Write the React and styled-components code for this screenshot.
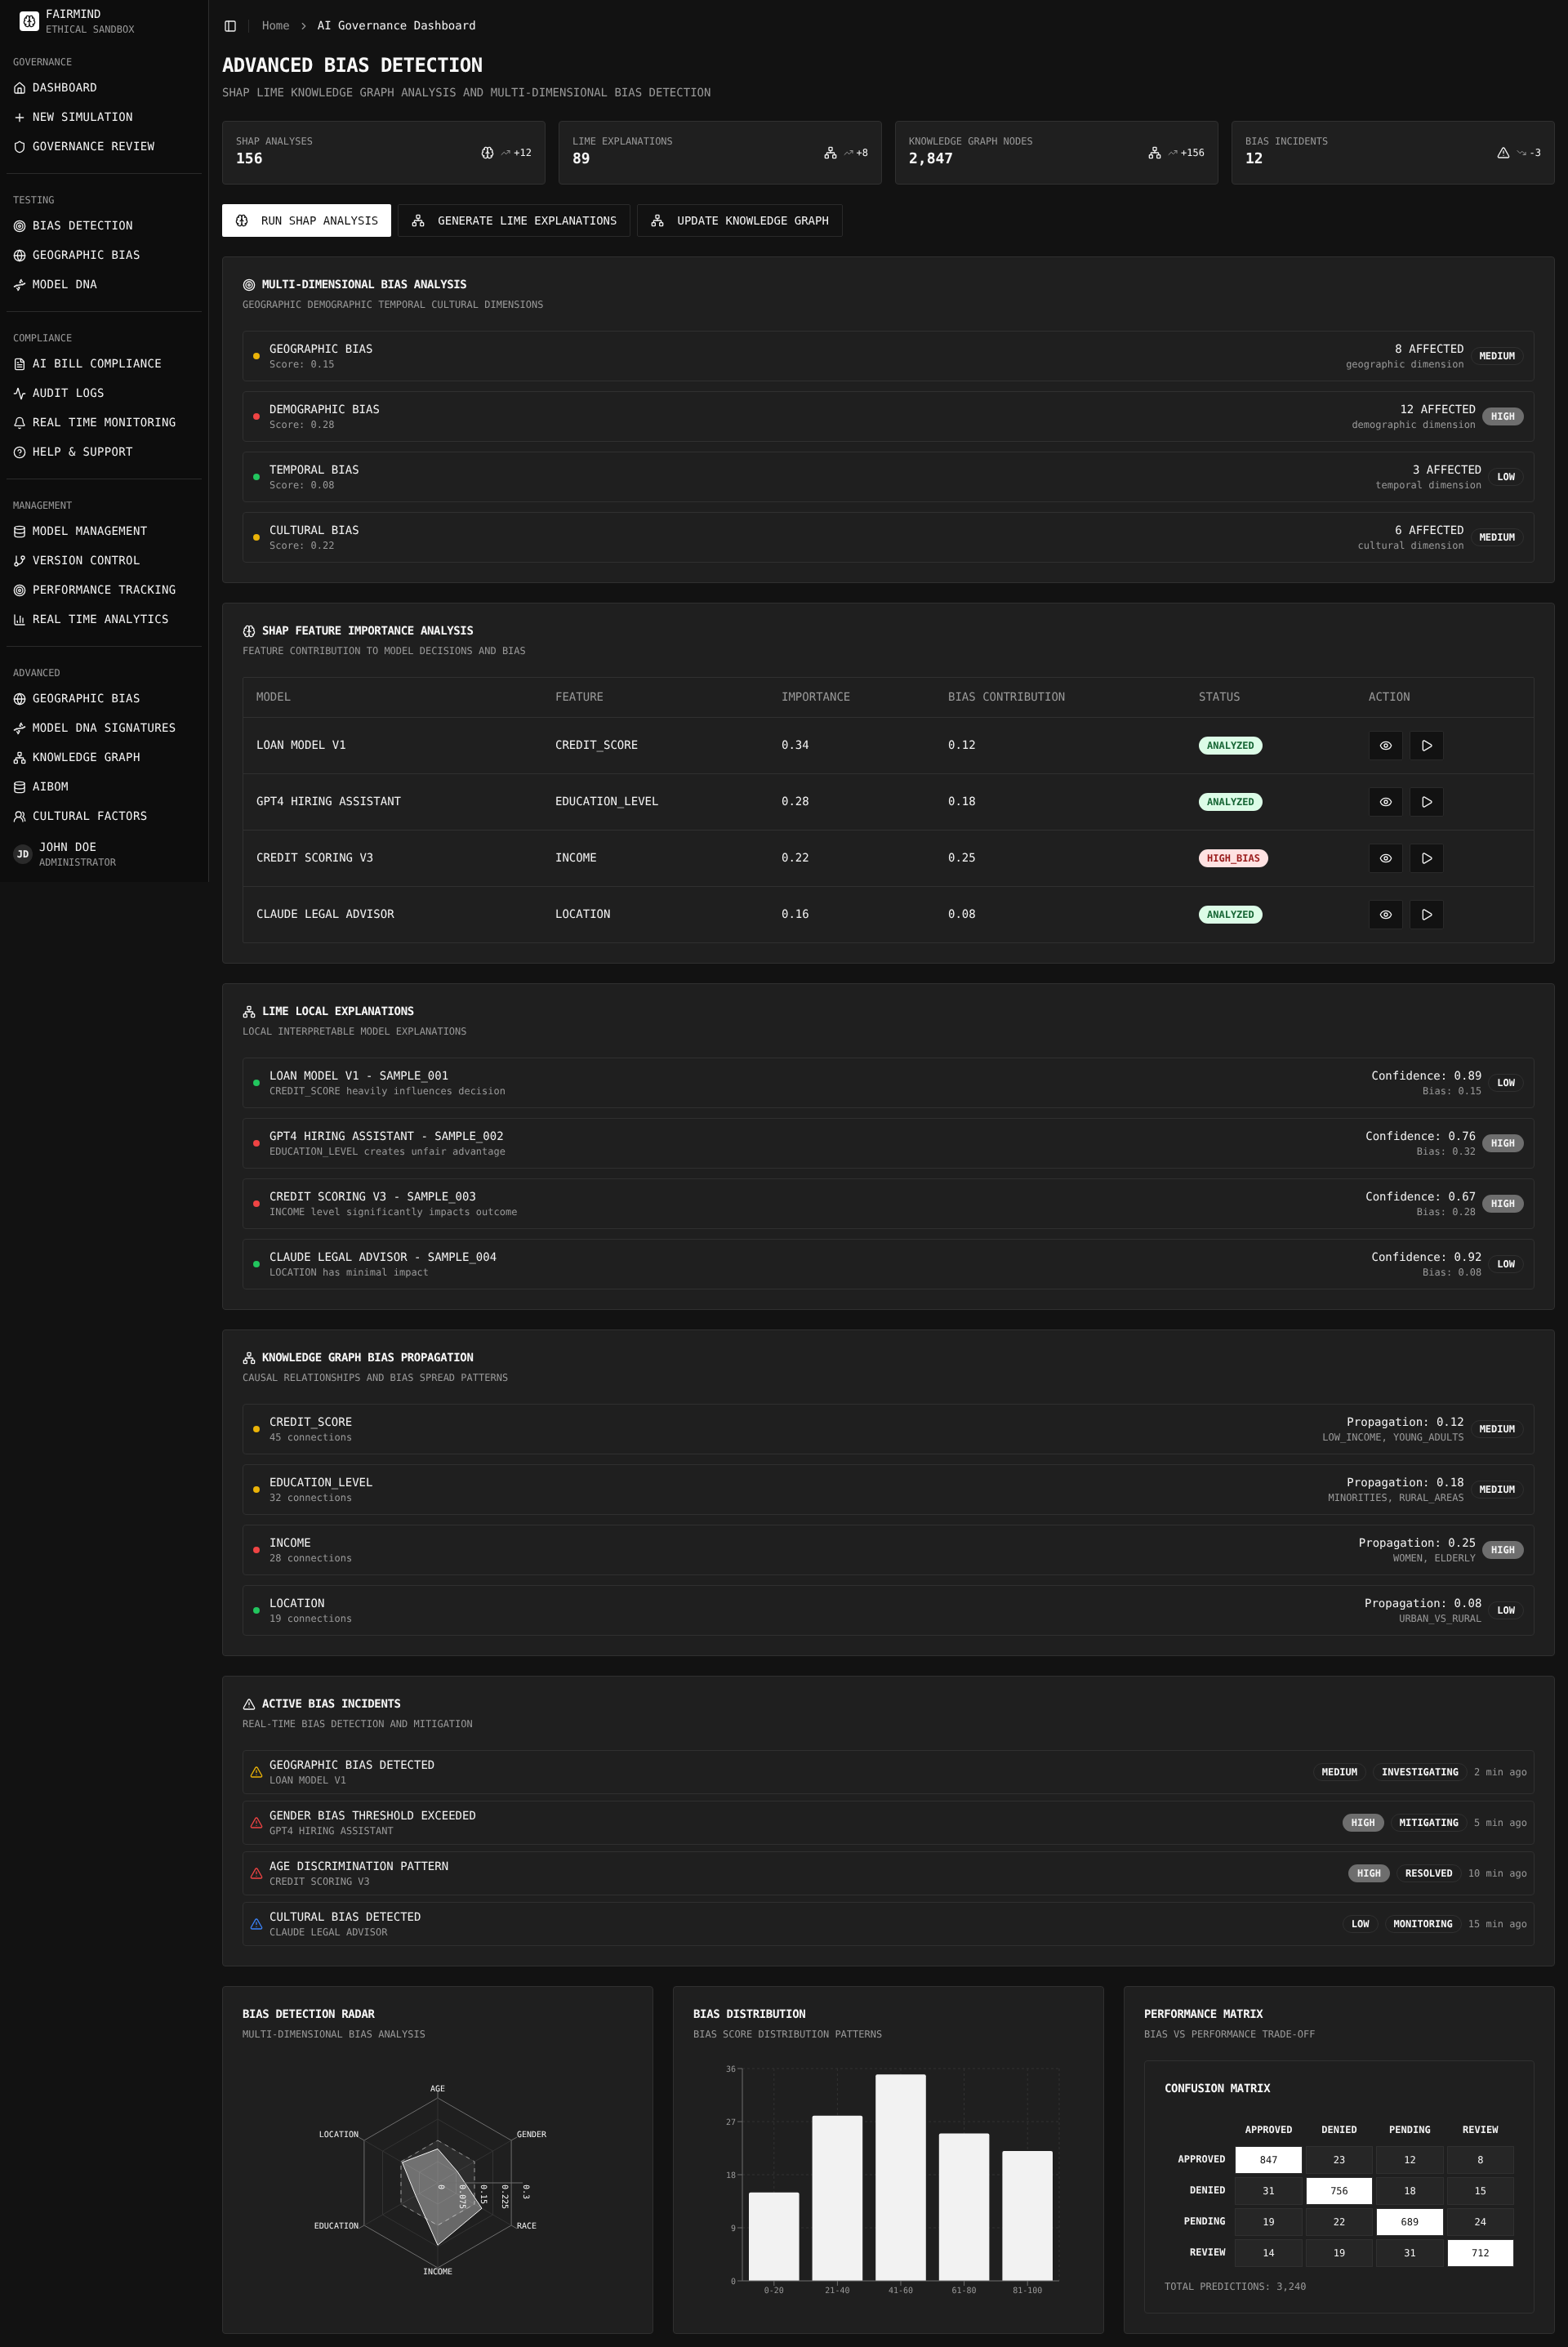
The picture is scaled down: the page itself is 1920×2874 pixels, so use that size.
import React from 'react';
import styled, { createGlobalStyle, css } from 'styled-components';
import {
  Brain, House, Plus, Shield, Target, Globe, Dna, FileText, Activity, Bell, CircleHelp, Database,
  GitBranch, ChartColumn, Network, UsersRound, TrendingUp, TrendingDown, TriangleAlert, Eye, Play,
  PanelLeft, ChevronRight,
} from 'lucide-react';

const MONO = '"DejaVu Sans Mono", "Liberation Mono", monospace';

const Global = createGlobalStyle`
  * { box-sizing: border-box; }
  html, body { margin: 0; padding: 0; background: #121212; color: #f2f2f2; font-family: ${MONO}; font-size: 14px; line-height: 20px; text-rendering: geometricPrecision; }
`;

const Shell = styled.div`display: flex; width: 1920px; min-height: 2874px; align-items: flex-start; will-change: transform;`;
const Sidebar = styled.aside`width: 256px; height: 1080px; flex: none; background: #0d0d0d; border-right: 1px solid #2e2e2e; display: flex; flex-direction: column;`;
const Brand = styled.div`height: 52px; padding: 8px 8px 8px 24px; display: flex; gap: 8px;`;
const LogoBox = styled.div`width: 24px; height: 24px; margin-top: 6px; background: #fff; color: #111; border-radius: 4px; display: flex; align-items: center; justify-content: center;`;
const BrandText = styled.div`display: flex; flex-direction: column;`;
const BrandName = styled.span`font-size: 14px; line-height: 20px; color: #f2f2f2;`;
const BrandSub = styled.span`font-size: 12px; line-height: 16px; color: #999;`;
const Group = styled.div`padding: 8px 8px ${p => p.$last ? '4px' : '8px'};`;
const GroupLabel = styled.div`height: 32px; padding: 0 8px; display: flex; align-items: center; font-size: 12px; color: #999;`;
const NavList = styled.div`display: flex; flex-direction: column; gap: 4px;`;
const NavItem = styled.div`height: 32px; padding: 0 8px; display: flex; align-items: center; gap: 8px; font-size: 14px; letter-spacing: .35px; color: #f2f2f2; white-space: nowrap;`;
const SideRule = styled.div`height: 1px; margin: 8px; background: #2a2a2a;`;
const Footer = styled.div`padding: 8px 16px; display: flex; align-items: center; gap: 8px;`;
const Avatar = styled.div`width: 24px; height: 24px; border-radius: 50%; background: #2a2a2a; display: flex; align-items: center; justify-content: center; font-size: 12px; font-weight: 700;`;
const UserName = styled.div`font-size: 14px; line-height: 20px; letter-spacing: .35px;`;
const UserRole = styled.div`font-size: 12px; line-height: 16px; color: #999;`;

const Main = styled.main`flex: 1; min-width: 0; display: flex; flex-direction: column;`;
const Topbar = styled.header`height: 64px; padding: 0 16px 0 12px; display: flex; align-items: center;`;
const Trigger = styled.div`width: 28px; height: 28px; display: flex; align-items: center; justify-content: center; color: #eee;`;
const TopSep = styled.div`width: 1px; height: 16px; background: #2e2e2e; margin: 0 16px 0 8px;`;
const Crumbs = styled.nav`display: flex; align-items: center; gap: 10px; font-size: 14px;`;
const CrumbMuted = styled.span`color: #999;`;
const CrumbIcon = styled.span`display: flex; color: #999;`;
const Content = styled.div`padding: 0 16px 16px; display: flex; flex-direction: column;`;
const PageTitle = styled.h1`margin: 0 0 8px; font-size: 24px; line-height: 32px; font-weight: 700; letter-spacing: -.6px; color: #f7f7f7;`;
const PageSub = styled.p`margin: 0 0 24px; font-size: 14px; line-height: 20px; color: #999;`;
const Stats = styled.div`display: grid; grid-template-columns: repeat(4, 1fr); gap: 16px; margin-bottom: 24px;`;
const StatCard = styled.div`background: #1f1f1f; border: 1px solid #303030; border-radius: 4px; padding: 16px; display: flex; align-items: center; justify-content: space-between;`;
const StatLabel = styled.div`font-size: 12px; line-height: 16px; color: #999;`;
const StatValue = styled.div`font-size: 18px; line-height: 28px; font-weight: 700; color: #f7f7f7;`;
const StatRight = styled.div`display: flex; align-items: center; gap: 8px;`;
const Trend = styled.div`display: flex; align-items: center; gap: 4px; font-size: 12px; color: #f2f2f2; svg { color: #999; }`;
const Actions = styled.div`display: flex; gap: 8px; margin-bottom: 24px;`;
const Btn = styled.button`
  height: 40px; padding: 0 16px; display: inline-flex; align-items: center; gap: 16px; font: inherit; font-family: ${MONO};
  border-radius: 2px; cursor: pointer;
  ${p => p.$primary ? css`background: #fff; color: #111; border: 0;` : css`background: #121212; color: #f2f2f2; border: 1px solid #2a2a2a;`}
`;
const Card = styled.section`background: #1f1f1f; border: 1px solid #303030; border-radius: 4px; padding: 24px; margin-bottom: 24px;`;
const CardTitle = styled.h2`margin: 0; display: flex; align-items: center; gap: 8px; font-size: 14px; line-height: 20px; font-weight: 700; letter-spacing: -.35px; color: #f7f7f7;`;
const CardDesc = styled.p`margin: 6px 0 24px; font-size: 12px; line-height: 16px; color: #999;`;
const List = styled.div`display: flex; flex-direction: column; gap: ${p => p.$tight ? '8px' : '12px'};`;
const Row = styled.div`border: 1px solid #303030; border-radius: 4px; padding: ${p => p.$tight ? '8px' : '12px'}; display: flex; align-items: center; justify-content: space-between; gap: 8px;`;
const RowLeft = styled.div`display: flex; align-items: center; gap: ${p => p.$tight ? '8px' : '12px'};`;
const Dot = styled.span`width: 8px; height: 8px; border-radius: 50%; background: ${p => p.$c};`;
const RowTitle = styled.div`font-size: 14px; line-height: 20px; color: #f2f2f2;`;
const RowSub = styled.div`font-size: 12px; line-height: 16px; color: #999;`;
const RowRight = styled.div`display: flex; align-items: center; gap: 8px;`;
const RightText = styled.div`text-align: right;`;
const Badge = styled.span`
  display: inline-flex; align-items: center; height: 22px; padding: 0 10px; border-radius: 999px; font-size: 12px; line-height: 16px; font-weight: 700;
  ${p => p.$kind === 'high' ? css`background: #6e6e6e; color: #f2f2f2; border: 1px solid transparent;`
    : p.$kind === 'ok' ? css`background: #dcfce7; color: #166534;`
    : p.$kind === 'bad' ? css`background: #fee2e2; color: #991b1b;`
    : css`color: #f7f7f7; border: 1px solid #303030;`}
`;
const TableBox = styled.div`border: 1px solid #303030; border-radius: 2px;`;
const Table = styled.table`width: 100%; border-collapse: collapse; table-layout: fixed; font-size: 14px;`;
const Th = styled.th`height: 48px; padding: 0 16px; text-align: left; font-weight: 400; color: #999; border-bottom: 1px solid #303030;`;
const Td = styled.td`height: 69px; padding: 0 16px; color: #f2f2f2; tr:not(:last-child) > & { border-bottom: 1px solid #303030; }`;
const IconBtns = styled.div`display: flex; gap: 8px;`;
const IconBtn = styled.div`width: 42px; height: 36px; background: #121212; border: 1px solid #2a2a2a; border-radius: 2px; display: flex; align-items: center; justify-content: center; color: #f2f2f2;`;
const ChartGrid = styled.div`display: grid; grid-template-columns: repeat(3, 1fr); gap: 24px;`;
const ChartCard = styled(Card)`margin: 0;`;
const Chart = styled.svg`display: block; width: 100%; height: 300px; font-family: ${MONO}; font-size: 10px;`;
const MatrixBox = styled.div`border: 1px solid #303030; border-radius: 4px; padding: 24px;`;
const MatrixTitle = styled.h3`margin: 0 0 24px; font-size: 14px; line-height: 20px; font-weight: 700; letter-spacing: -.35px; color: #f7f7f7;`;
const Matrix = styled.div`display: grid; grid-template-columns: repeat(5, 1fr); gap: 4px; font-size: 12px; line-height: 16px;`;
const MHead = styled.div`padding: 8px; text-align: center; font-weight: 700; color: #f2f2f2;`;
const MRow = styled.div`padding: 8px; text-align: right; font-weight: 700; color: #f2f2f2;`;
const MCell = styled.div`padding: 8px; text-align: center; border: 1px solid #303030; ${p => p.$on ? css`background: #fff; color: #111;` : css`background: #262626; color: #f2f2f2;`}`;
const MTotal = styled.div`margin-top: 16px; font-size: 12px; line-height: 16px; color: #999;`;

const GREEN = '#22c55e', RED = '#ef4444', AMBER = '#eab308', BLUE = '#3b82f6';

const nav = [
  ['GOVERNANCE', [[House, 'DASHBOARD'], [Plus, 'NEW SIMULATION'], [Shield, 'GOVERNANCE REVIEW']]],
  ['TESTING', [[Target, 'BIAS DETECTION'], [Globe, 'GEOGRAPHIC BIAS'], [Dna, 'MODEL DNA']]],
  ['COMPLIANCE', [[FileText, 'AI BILL COMPLIANCE'], [Activity, 'AUDIT LOGS'], [Bell, 'REAL TIME MONITORING'], [CircleHelp, 'HELP & SUPPORT']]],
  ['MANAGEMENT', [[Database, 'MODEL MANAGEMENT'], [GitBranch, 'VERSION CONTROL'], [Target, 'PERFORMANCE TRACKING'], [ChartColumn, 'REAL TIME ANALYTICS']]],
  ['ADVANCED', [[Globe, 'GEOGRAPHIC BIAS'], [Dna, 'MODEL DNA SIGNATURES'], [Network, 'KNOWLEDGE GRAPH'], [Database, 'AIBOM'], [UsersRound, 'CULTURAL FACTORS']]],
];
const stats = [
  ['SHAP ANALYSES', '156', Brain, TrendingUp, '+12'],
  ['LIME EXPLANATIONS', '89', Network, TrendingUp, '+8'],
  ['KNOWLEDGE GRAPH NODES', '2,847', Network, TrendingUp, '+156'],
  ['BIAS INCIDENTS', '12', TriangleAlert, TrendingDown, '-3'],
];
const sevColor = { medium: AMBER, high: RED, low: GREEN };
const dims = [
  ['GEOGRAPHIC BIAS', 'Score: 0.15', '8 AFFECTED', 'geographic dimension', 'medium'],
  ['DEMOGRAPHIC BIAS', 'Score: 0.28', '12 AFFECTED', 'demographic dimension', 'high'],
  ['TEMPORAL BIAS', 'Score: 0.08', '3 AFFECTED', 'temporal dimension', 'low'],
  ['CULTURAL BIAS', 'Score: 0.22', '6 AFFECTED', 'cultural dimension', 'medium'],
];
const lime = [
  ['LOAN MODEL V1 - SAMPLE_001', 'CREDIT_SCORE heavily influences decision', 'Confidence: 0.89', 'Bias: 0.15', 'low'],
  ['GPT4 HIRING ASSISTANT - SAMPLE_002', 'EDUCATION_LEVEL creates unfair advantage', 'Confidence: 0.76', 'Bias: 0.32', 'high'],
  ['CREDIT SCORING V3 - SAMPLE_003', 'INCOME level significantly impacts outcome', 'Confidence: 0.67', 'Bias: 0.28', 'high'],
  ['CLAUDE LEGAL ADVISOR - SAMPLE_004', 'LOCATION has minimal impact', 'Confidence: 0.92', 'Bias: 0.08', 'low'],
];
const graph = [
  ['CREDIT_SCORE', '45 connections', 'Propagation: 0.12', 'LOW_INCOME, YOUNG_ADULTS', 'medium'],
  ['EDUCATION_LEVEL', '32 connections', 'Propagation: 0.18', 'MINORITIES, RURAL_AREAS', 'medium'],
  ['INCOME', '28 connections', 'Propagation: 0.25', 'WOMEN, ELDERLY', 'high'],
  ['LOCATION', '19 connections', 'Propagation: 0.08', 'URBAN_VS_RURAL', 'low'],
];
const shap = [
  ['LOAN MODEL V1', 'CREDIT_SCORE', '0.34', '0.12', 'ANALYZED'],
  ['GPT4 HIRING ASSISTANT', 'EDUCATION_LEVEL', '0.28', '0.18', 'ANALYZED'],
  ['CREDIT SCORING V3', 'INCOME', '0.22', '0.25', 'HIGH_BIAS'],
  ['CLAUDE LEGAL ADVISOR', 'LOCATION', '0.16', '0.08', 'ANALYZED'],
];
const colWidths = [366, 277, 204, 307, 208, 218];
const incidents = [
  [AMBER, 'GEOGRAPHIC BIAS DETECTED', 'LOAN MODEL V1', 'medium', 'MEDIUM', 'INVESTIGATING', '2 min ago'],
  [RED, 'GENDER BIAS THRESHOLD EXCEEDED', 'GPT4 HIRING ASSISTANT', 'high', 'HIGH', 'MITIGATING', '5 min ago'],
  [RED, 'AGE DISCRIMINATION PATTERN', 'CREDIT SCORING V3', 'high', 'HIGH', 'RESOLVED', '10 min ago'],
  [BLUE, 'CULTURAL BIAS DETECTED', 'CLAUDE LEGAL ADVISOR', 'low', 'LOW', 'MONITORING', '15 min ago'],
];

function SevList({ items }) {
  return (
    <List>
      {items.map(([t, s, r1, r2, sev]) => (
        <Row key={t}>
          <RowLeft><Dot $c={sevColor[sev]} /><div><RowTitle>{t}</RowTitle><RowSub>{s}</RowSub></div></RowLeft>
          <RowRight>
            <RightText><RowTitle>{r1}</RowTitle><RowSub>{r2}</RowSub></RightText>
            <Badge $kind={sev}>{sev.toUpperCase()}</Badge>
          </RowRight>
        </Row>
      ))}
    </List>
  );
}

function Radar() {
  const cx = 239, cy = 150, R = 104;
  const pt = (i, r) => {
    const a = (Math.PI / 3) * i;
    return [cx + r * Math.sin(a), cy - r * Math.cos(a)];
  };
  const poly = vals => vals.map((v, i) => pt(i, v / 0.3 * R).map(n => n.toFixed(1)).join(',')).join(' ');
  const labels = [['AGE', 0, -116, 'middle'], ['GENDER', 97, -60, 'start'], ['RACE', 97, 52, 'start'], ['INCOME', 0, 108, 'middle'], ['EDUCATION', -97, 52, 'end'], ['LOCATION', -97, -60, 'end']];
  return (
    <Chart viewBox="0 0 478 300">
      {[1, 2, 3].map(k => <polygon key={k} points={poly(Array(6).fill(0.075 * k))} fill="none" stroke="#333" />)}
      <polygon points={poly(Array(6).fill(0.3))} fill="none" stroke="#6e6e6e" />
      {[0, 1, 2, 3, 4, 5].map(i => {
        const [x, y] = pt(i, R);
        const [tx, ty] = pt(i, R + 8);
        return <g key={i}><line x1={cx} y1={cy} x2={x} y2={y} stroke="#333" /><line x1={x} y1={y} x2={tx} y2={ty} stroke="#6e6e6e" /></g>;
      })}
      <polygon points={poly(Array(6).fill(0.15))} fill="#fff" fillOpacity=".06" stroke="#999" strokeDasharray="5 5" />
      <polygon points={poly([0.12, 0.08, 0.18, 0.22, 0.09, 0.145])} fill="#fff" fillOpacity=".33" stroke="#f5f5f5" />
      <line x1={cx} y1={cy} x2={cx + 104} y2={cy} stroke="#6e6e6e" />
      {['0', '0.075', '0.15', '0.225', '0.3'].map((t, i) => (
        <text key={t} transform={`translate(${cx + i * 26 + 0.5} ${cy + 2}) rotate(90)`} fill="#f2f2f2">{t}</text>
      ))}
      {labels.map(([t, dx, dy, anchor]) => (
        <text key={t} x={cx + dx} y={cy + dy + 3.5} textAnchor={anchor} fill="#f2f2f2">{t}</text>
      ))}
    </Chart>
  );
}

function Bars() {
  const left = 60, right = 448, top = 10, bottom = 270;
  const data = [['0-20', 15], ['21-40', 28], ['41-60', 35], ['61-80', 25], ['81-100', 22]];
  const band = (right - left) / 5;
  const y = v => bottom - (v / 36) * (bottom - top);
  return (
    <Chart viewBox="0 0 478 300">
      <g stroke="#333" strokeDasharray="3 3">
        {[9, 18, 27, 36].map(v => <line key={v} x1={left} x2={right} y1={y(v)} y2={y(v)} />)}
        {data.map((_, i) => <line key={i} x1={left + band * (i + .5)} x2={left + band * (i + .5)} y1={top} y2={bottom} />)}
        <line x1={right} x2={right} y1={top} y2={bottom} />
      </g>
      {data.map(([k, v], i) => {
        const x = left + band * i + 8, w = band - 16, t = y(v), r = 2;
        return <path key={k} d={`M${x} ${bottom}V${t + r}Q${x} ${t} ${x + r} ${t}H${x + w - r}Q${x + w} ${t} ${x + w} ${t + r}V${bottom}Z`} fill="#f2f2f2" />;
      })}
      <g stroke="#6e6e6e">
        <line x1={left} x2={left} y1={top} y2={bottom} />
        <line x1={left} x2={right} y1={bottom} y2={bottom} />
        {[0, 9, 18, 27, 36].map(v => <line key={v} x1={left - 6} x2={left} y1={y(v)} y2={y(v)} />)}
        {data.map((_, i) => <line key={i} x1={left + band * (i + .5)} x2={left + band * (i + .5)} y1={bottom} y2={bottom + 6} />)}
      </g>
      <g fill="#999">
        {[0, 9, 18, 27, 36].map(v => <text key={v} x={left - 8} y={y(v) + 3.5} textAnchor="end">{v}</text>)}
        {data.map(([k], i) => <text key={k} x={left + band * (i + .5)} y={bottom + 15} textAnchor="middle">{k}</text>)}
      </g>
    </Chart>
  );
}

const mLabels = ['APPROVED', 'DENIED', 'PENDING', 'REVIEW'];
const mData = [[847, 23, 12, 8], [31, 756, 18, 15], [19, 22, 689, 24], [14, 19, 31, 712]];

export default function App() {
  return (
    <>
      <Global />
      <Shell>
        <Sidebar>
          <Brand>
            <LogoBox><Brain size={16} /></LogoBox>
            <BrandText><BrandName>FAIRMIND</BrandName><BrandSub>ETHICAL SANDBOX</BrandSub></BrandText>
          </Brand>
          {nav.map(([label, items], gi) => (
            <React.Fragment key={label}>
              <Group $last={gi === nav.length - 1}>
                <GroupLabel>{label}</GroupLabel>
                <NavList>
                  {items.map(([Icon, t]) => <NavItem key={t}><Icon size={16} />{t}</NavItem>)}
                </NavList>
              </Group>
              {gi < nav.length - 1 && <SideRule />}
            </React.Fragment>
          ))}
          <Footer>
            <Avatar>JD</Avatar>
            <div><UserName>JOHN DOE</UserName><UserRole>ADMINISTRATOR</UserRole></div>
          </Footer>
        </Sidebar>
        <Main>
          <Topbar>
            <Trigger><PanelLeft size={16} /></Trigger>
            <TopSep />
            <Crumbs>
              <CrumbMuted>Home</CrumbMuted>
              <CrumbIcon><ChevronRight size={14} /></CrumbIcon>
              <span>AI Governance Dashboard</span>
            </Crumbs>
          </Topbar>
          <Content>
            <PageTitle>ADVANCED BIAS DETECTION</PageTitle>
            <PageSub>SHAP LIME KNOWLEDGE GRAPH ANALYSIS AND MULTI-DIMENSIONAL BIAS DETECTION</PageSub>
            <Stats>
              {stats.map(([l, v, Icon, T, d]) => (
                <StatCard key={l}>
                  <div><StatLabel>{l}</StatLabel><StatValue>{v}</StatValue></div>
                  <StatRight><Icon size={16} /><Trend><T size={12} />{d}</Trend></StatRight>
                </StatCard>
              ))}
            </Stats>
            <Actions>
              <Btn $primary><Brain size={16} />RUN SHAP ANALYSIS</Btn>
              <Btn><Network size={16} />GENERATE LIME EXPLANATIONS</Btn>
              <Btn><Network size={16} />UPDATE KNOWLEDGE GRAPH</Btn>
            </Actions>
            <Card>
              <CardTitle><Target size={16} />MULTI-DIMENSIONAL BIAS ANALYSIS</CardTitle>
              <CardDesc>GEOGRAPHIC DEMOGRAPHIC TEMPORAL CULTURAL DIMENSIONS</CardDesc>
              <SevList items={dims} />
            </Card>
            <Card>
              <CardTitle><Brain size={16} />SHAP FEATURE IMPORTANCE ANALYSIS</CardTitle>
              <CardDesc>FEATURE CONTRIBUTION TO MODEL DECISIONS AND BIAS</CardDesc>
              <TableBox>
                <Table>
                  <colgroup>{colWidths.map((w, i) => <col key={i} width={w} />)}</colgroup>
                  <thead>
                    <tr>{['MODEL', 'FEATURE', 'IMPORTANCE', 'BIAS CONTRIBUTION', 'STATUS', 'ACTION'].map(h => <Th key={h}>{h}</Th>)}</tr>
                  </thead>
                  <tbody>
                    {shap.map(([m, f, imp, b, st]) => (
                      <tr key={m}>
                        <Td>{m}</Td><Td>{f}</Td><Td>{imp}</Td><Td>{b}</Td>
                        <Td><Badge $kind={st === 'ANALYZED' ? 'ok' : 'bad'}>{st}</Badge></Td>
                        <Td><IconBtns><IconBtn><Eye size={16} /></IconBtn><IconBtn><Play size={16} /></IconBtn></IconBtns></Td>
                      </tr>
                    ))}
                  </tbody>
                </Table>
              </TableBox>
            </Card>
            <Card>
              <CardTitle><Network size={16} />LIME LOCAL EXPLANATIONS</CardTitle>
              <CardDesc>LOCAL INTERPRETABLE MODEL EXPLANATIONS</CardDesc>
              <SevList items={lime} />
            </Card>
            <Card>
              <CardTitle><Network size={16} />KNOWLEDGE GRAPH BIAS PROPAGATION</CardTitle>
              <CardDesc>CAUSAL RELATIONSHIPS AND BIAS SPREAD PATTERNS</CardDesc>
              <SevList items={graph} />
            </Card>
            <Card>
              <CardTitle><TriangleAlert size={16} />ACTIVE BIAS INCIDENTS</CardTitle>
              <CardDesc>REAL-TIME BIAS DETECTION AND MITIGATION</CardDesc>
              <List $tight>
                {incidents.map(([c, t, s, sev, sevT, st, time]) => (
                  <Row key={t} $tight>
                    <RowLeft $tight><TriangleAlert size={16} color={c} /><div><RowTitle>{t}</RowTitle><RowSub>{s}</RowSub></div></RowLeft>
                    <RowRight><Badge $kind={sev}>{sevT}</Badge><Badge>{st}</Badge><RowSub>{time}</RowSub></RowRight>
                  </Row>
                ))}
              </List>
            </Card>
            <ChartGrid>
              <ChartCard>
                <CardTitle>BIAS DETECTION RADAR</CardTitle>
                <CardDesc>MULTI-DIMENSIONAL BIAS ANALYSIS</CardDesc>
                <Radar />
              </ChartCard>
              <ChartCard>
                <CardTitle>BIAS DISTRIBUTION</CardTitle>
                <CardDesc>BIAS SCORE DISTRIBUTION PATTERNS</CardDesc>
                <Bars />
              </ChartCard>
              <ChartCard>
                <CardTitle>PERFORMANCE MATRIX</CardTitle>
                <CardDesc>BIAS VS PERFORMANCE TRADE-OFF</CardDesc>
                <MatrixBox>
                  <MatrixTitle>CONFUSION MATRIX</MatrixTitle>
                  <Matrix>
                    <div />
                    {mLabels.map(l => <MHead key={l}>{l}</MHead>)}
                    {mData.map((r, i) => (
                      <React.Fragment key={i}>
                        <MRow>{mLabels[i]}</MRow>
                        {r.map((v, j) => <MCell key={j} $on={i === j}>{v}</MCell>)}
                      </React.Fragment>
                    ))}
                  </Matrix>
                  <MTotal>TOTAL PREDICTIONS: 3,240</MTotal>
                </MatrixBox>
              </ChartCard>
            </ChartGrid>
          </Content>
        </Main>
      </Shell>
    </>
  );
}
